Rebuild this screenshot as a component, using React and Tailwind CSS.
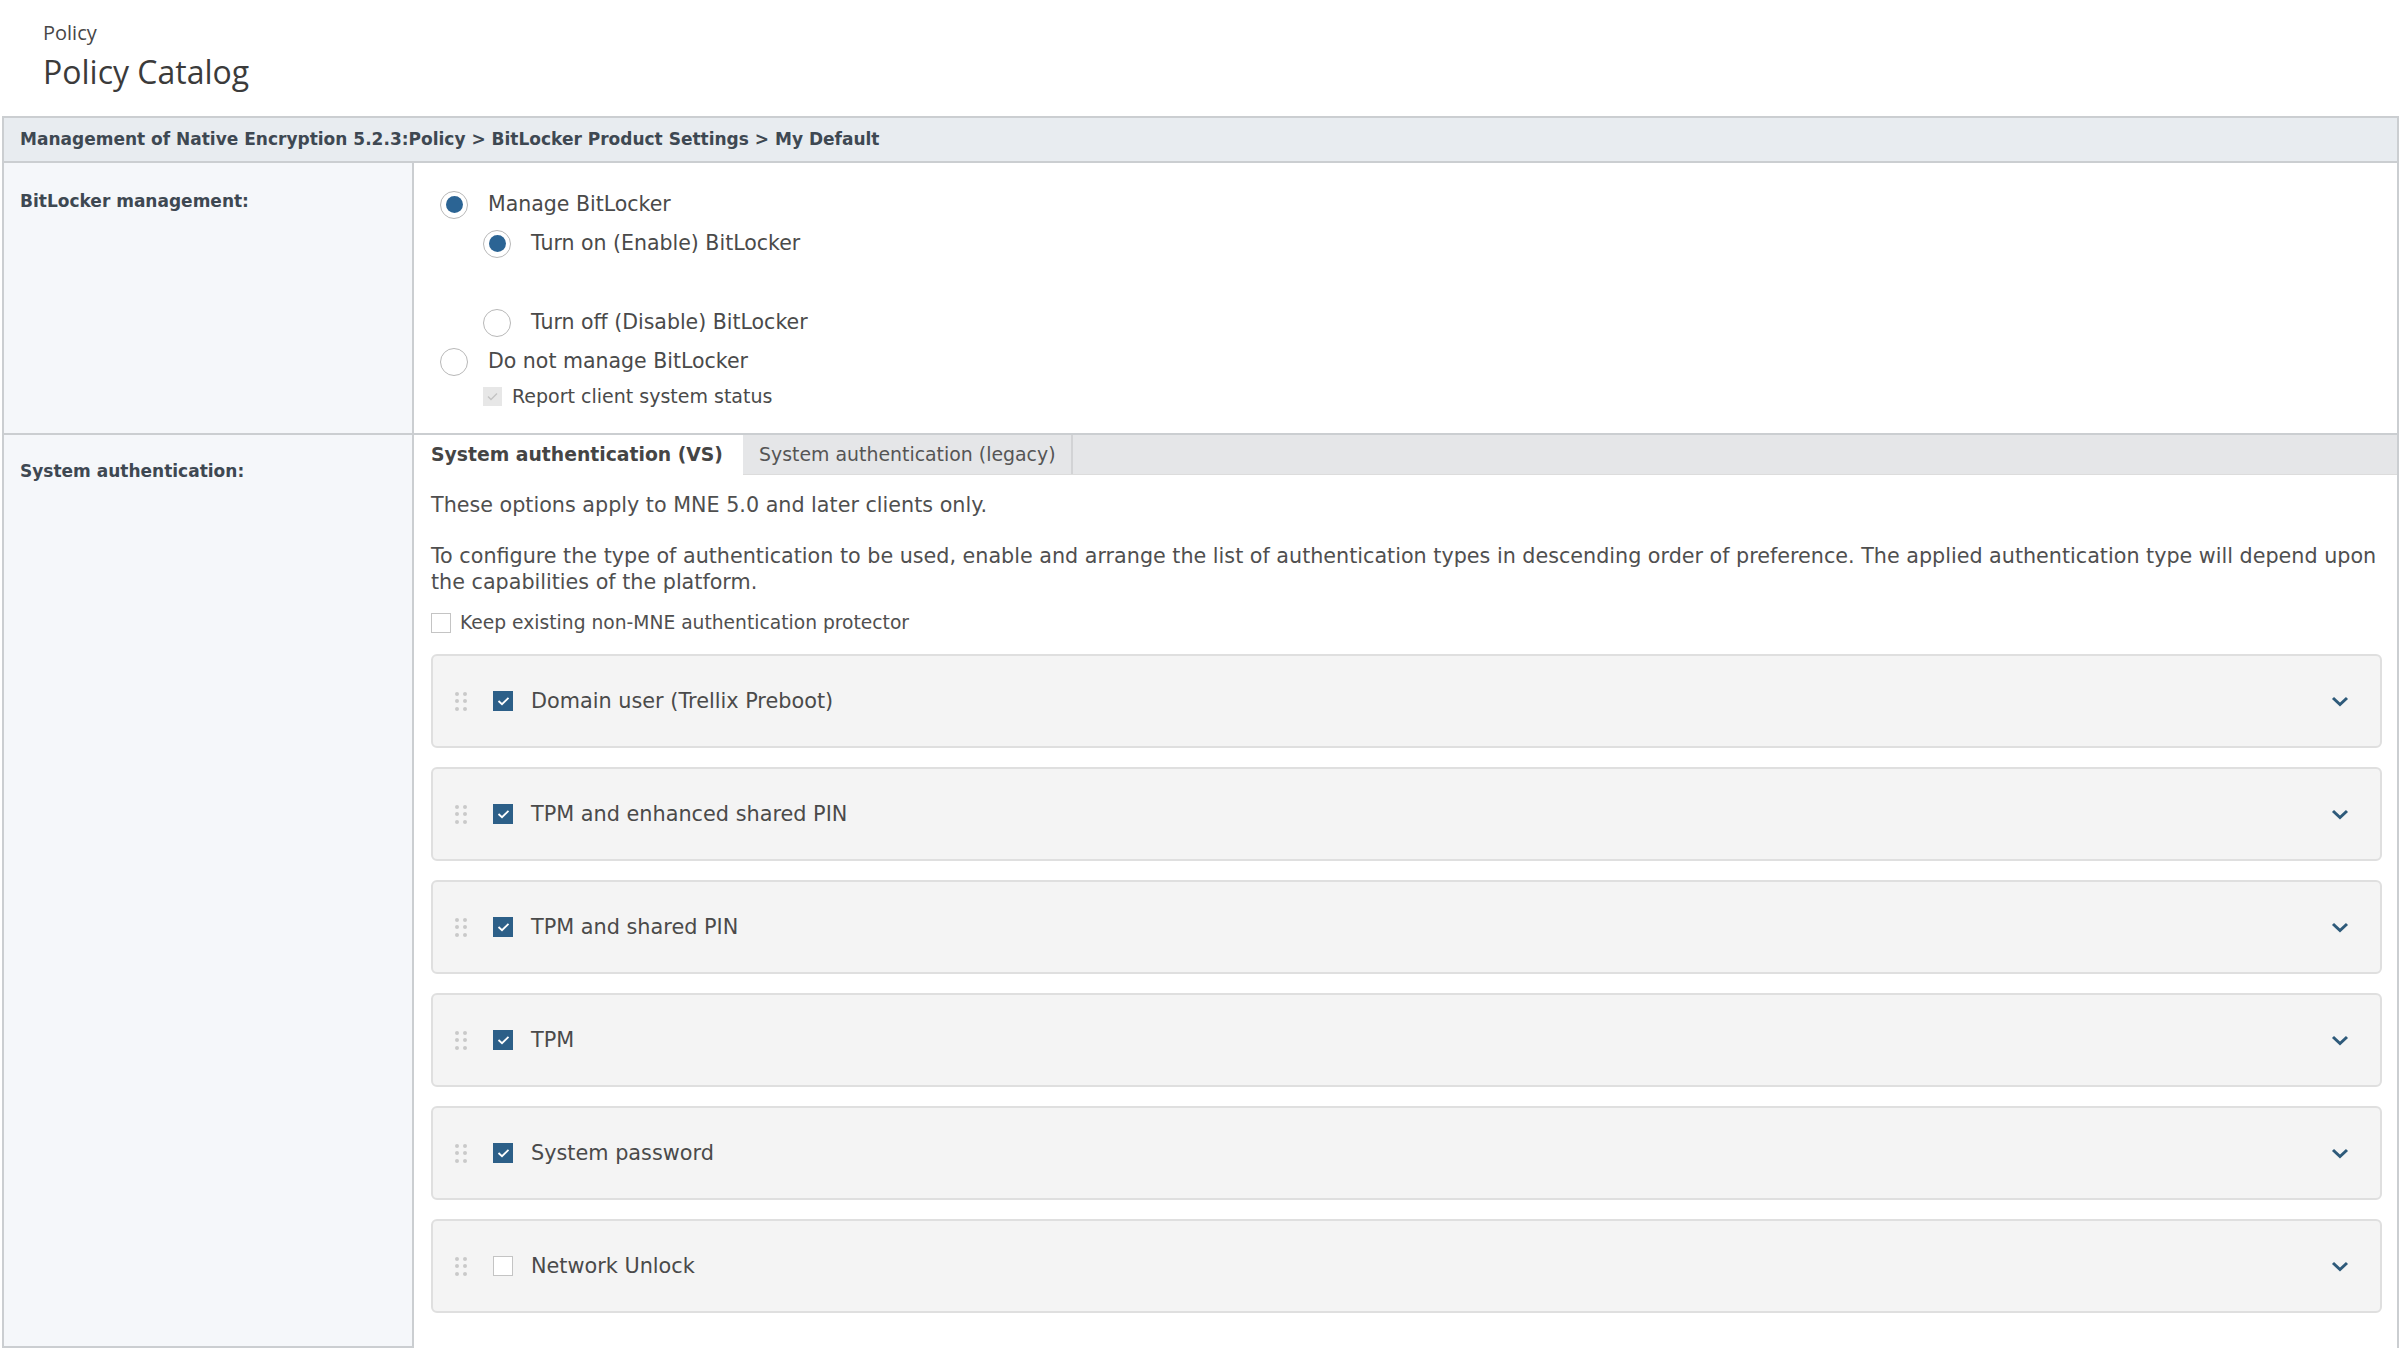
import React from "react";

const body = { fontFamily: '"DejaVu Sans", Verdana, sans-serif' };

const methods = [
  { label: "Domain user (Trellix Preboot)", on: true },
  { label: "TPM and enhanced shared PIN", on: true },
  { label: "TPM and shared PIN", on: true },
  { label: "TPM", on: true },
  { label: "System password", on: true },
  { label: "Network Unlock", on: false },
];

function Radio({ checked }) {
  return (
    <span className="flex h-[28px] w-[28px] shrink-0 items-center justify-center rounded-full border-[1.5px] border-[#b8b8b8] bg-white">
      {checked && <span className="h-[17px] w-[17px] rounded-full bg-[#2b6494]" />}
    </span>
  );
}

function RadioRow({ checked, label, indent }) {
  return (
    <div className={`flex h-[39px] items-center gap-[20px] ${indent ? "pl-[43px]" : ""}`}>
      <Radio checked={checked} />
      <span className="text-[20.5px] text-[#4a4a4a]">{label}</span>
    </div>
  );
}

function Check({ checked }) {
  if (!checked) {
    return <span className="block h-[20px] w-[20px] shrink-0 border-[1.5px] border-[#c4c4c4] bg-white" />;
  }
  return (
    <span className="flex h-[20px] w-[20px] shrink-0 items-center justify-center bg-[#2c5f88]">
      <svg width="13" height="10" viewBox="0 0 13 10" fill="none">
        <polyline points="1.5,5 5,8.2 11.5,1.8" stroke="#fff" strokeWidth="1.8" />
      </svg>
    </span>
  );
}

function Handle() {
  return (
    <span className="grid w-[12px] shrink-0 grid-cols-2 gap-x-[4px] gap-y-[3.5px]">
      {[0, 1, 2, 3, 4, 5].map((i) => (
        <span key={i} className="h-[4px] w-[4px] rounded-full bg-[#c9c9c9]" />
      ))}
    </span>
  );
}

function MethodCard({ label, on }) {
  return (
    <div className="flex h-[94px] items-center rounded-[6px] border-2 border-[#dfdfdf] bg-[#f4f4f4] pl-[22px] pr-[31px]">
      <Handle />
      <span className="ml-[26px] block">
        <Check checked={on} />
      </span>
      <span className="ml-[18px] flex-1 text-[20.8px] text-[#4a4a4a]">{label}</span>
      <svg width="18" height="11" viewBox="0 0 18 11" fill="none">
        <polyline points="2,2 9,8.5 16,2" stroke="#2e5a7a" strokeWidth="3" />
      </svg>
    </div>
  );
}

export default function App() {
  return (
    <div className="h-[1350px] overflow-hidden bg-white" style={body}>
      <div className="h-[116px] pl-[43px]" style={{ fontFamily: '"Open Sans", sans-serif' }}>
        <p className="pt-[20px] text-[20px] leading-[26px] text-[#474747]">Policy</p>
        <h1 className="mt-[4px] text-[32px] leading-[44px] text-[#3b3b3b]">Policy Catalog</h1>
      </div>

      <div className="ml-[2px] w-[2397px] border-x-2 border-[#cbced1]">
        <div className="flex h-[47px] items-center border-y-2 border-[#cbced1] bg-[#e8ecf0] px-[16px] text-[17px] font-bold text-[#3e4852]">
          Management of Native Encryption 5.2.3:Policy &gt; BitLocker Product Settings &gt; My Default
        </div>

        <div className="flex border-b-2 border-[#cbced1]">
          <div className="w-[410px] shrink-0 border-r-2 border-[#cbced1] bg-[#f5f7fa] pl-[16px] pt-[26px] text-[17px] font-bold leading-[24px] text-[#3e4852]">
            BitLocker management:
          </div>
          <div className="flex-1 pb-[21px] pl-[26px] pt-[22px]">
            <RadioRow checked label="Manage BitLocker" />
            <RadioRow checked indent label="Turn on (Enable) BitLocker" />
            <div className="h-[40px]" />
            <RadioRow indent label="Turn off (Disable) BitLocker" />
            <RadioRow label="Do not manage BitLocker" />
            <div className="flex h-[31px] items-center gap-[10px] pl-[43px]">
              <span className="flex h-[19px] w-[19px] items-center justify-center bg-[#e7e7e7]">
                <svg width="11" height="9" viewBox="0 0 11 9" fill="none">
                  <polyline points="1,4.5 4,7.5 10,1.5" stroke="#c3c3c3" strokeWidth="1.4" />
                </svg>
              </span>
              <span className="text-[19px] text-[#4a4a4a]">Report client system status</span>
            </div>
          </div>
        </div>

        <div className="flex items-start">
          <div className="h-[913px] w-[410px] shrink-0 border-b-2 border-r-2 border-[#cbced1] bg-[#f5f7fa] pl-[16px] pt-[24px] text-[17px] font-bold leading-[24px] text-[#3e4852]">
            System authentication:
          </div>
          <div className="min-w-0 flex-1">
            <div className="flex h-[40px] border-b border-[#dcdcdc] bg-[#e5e6e8]">
              <div className="-mb-px flex w-[329px] items-center bg-white pl-[17px] text-[18.8px] font-bold text-[#454545]">
                System authentication (VS)
              </div>
              <div className="flex w-[330px] items-center border-r-2 border-[#d2d3d5] pl-[16px] text-[18.9px] text-[#555]">
                System authentication (legacy)
              </div>
            </div>

            <div className="pl-[17px] pr-[15px] text-[20.7px] leading-[26px] text-[#4f4f4f]">
              <p className="mt-[17px]">These options apply to MNE 5.0 and later clients only.</p>
              <p className="mt-[25px]">
                To configure the type of authentication to be used, enable and arrange the list of authentication
                types in descending order of preference. The applied authentication type will depend upon the
                capabilities of the platform.
              </p>
              <label className="mt-[15px] flex h-[26px] items-center gap-[9px] text-[18.7px]">
                <span className="h-[20px] w-[20px] border-[1.5px] border-[#c4c4c4] bg-white" />
                Keep existing non-MNE authentication protector
              </label>

              <div className="mt-[18px] flex flex-col gap-[19px]">
                {methods.map((m) => (
                  <MethodCard key={m.label} {...m} />
                ))}
              </div>
            </div>
          </div>
        </div>
      </div>
    </div>
  );
}
